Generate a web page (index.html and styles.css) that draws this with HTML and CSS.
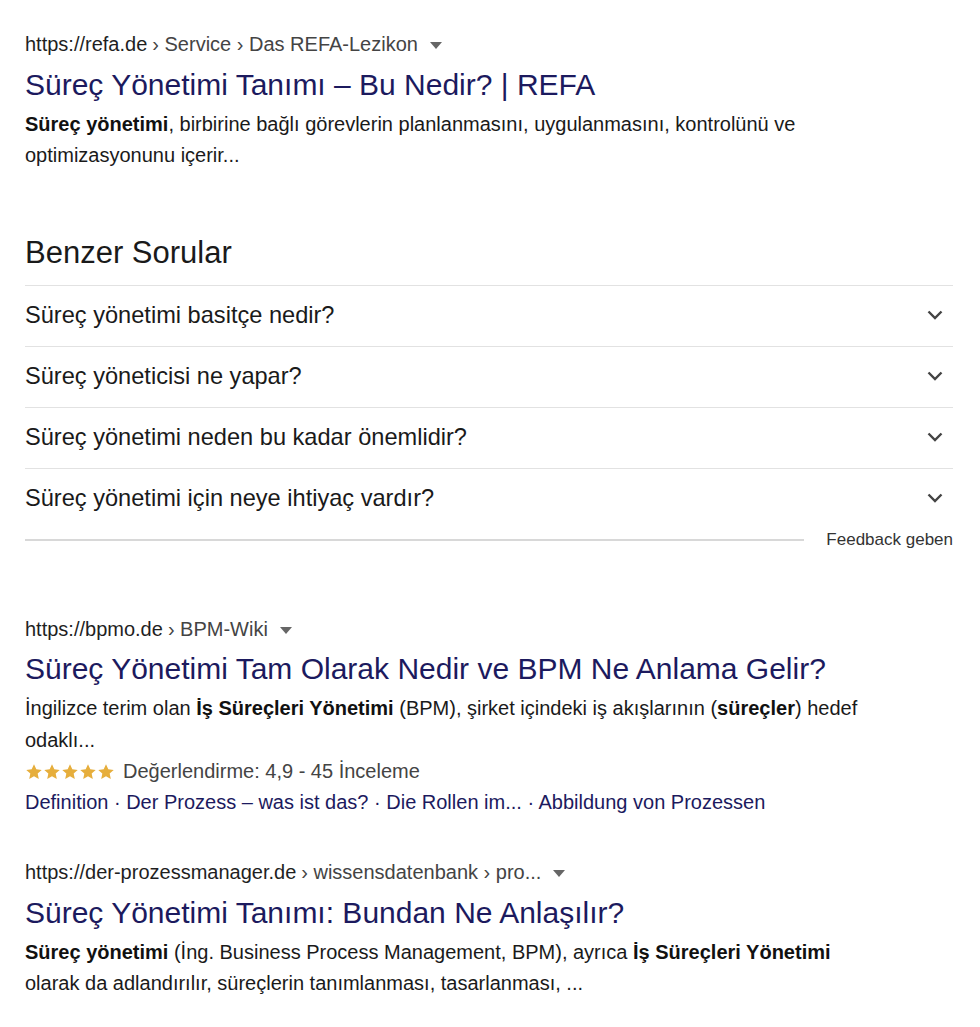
FILE: index.html
```html
<!DOCTYPE html>
<html lang="tr">
<head>
<meta charset="utf-8">
<link rel="stylesheet" href="styles.css">
</head>
<body>
<main class="page">
  <section class="result">
    <div class="url">https://refa.de <span class="crumb">› Service › Das REFA-Lezikon</span><span class="caret"></span></div>
    <h3 class="title">Süreç Yönetimi Tanımı – Bu Nedir? | REFA</h3>
    <p class="snippet"><b>Süreç yönetimi</b>, birbirine bağlı görevlerin planlanmasını, uygulanmasını, kontrolünü ve optimizasyonunu içerir...</p>
  </section>

  <section class="paa">
    <h2 class="paa-head">Benzer Sorular</h2>
    <div class="q"><span>Süreç yönetimi basitçe nedir?</span><svg class="chev" viewBox="0 0 16 10" width="16" height="10"><path d="M1.5 1.5 L8 8 L14.5 1.5" fill="none" stroke="#444" stroke-width="2.4"/></svg></div>
    <div class="q"><span>Süreç yöneticisi ne yapar?</span><svg class="chev" viewBox="0 0 16 10" width="16" height="10"><path d="M1.5 1.5 L8 8 L14.5 1.5" fill="none" stroke="#444" stroke-width="2.4"/></svg></div>
    <div class="q"><span>Süreç yönetimi neden bu kadar önemlidir?</span><svg class="chev" viewBox="0 0 16 10" width="16" height="10"><path d="M1.5 1.5 L8 8 L14.5 1.5" fill="none" stroke="#444" stroke-width="2.4"/></svg></div>
    <div class="q last"><span>Süreç yönetimi için neye ihtiyaç vardır?</span><svg class="chev" viewBox="0 0 16 10" width="16" height="10"><path d="M1.5 1.5 L8 8 L14.5 1.5" fill="none" stroke="#444" stroke-width="2.4"/></svg></div>
    <div class="feedback"><span class="fb-line"></span><span class="fb-text">Feedback geben</span></div>
  </section>

  <section class="result r2">
    <div class="url">https://bpmo.de <span class="crumb">› BPM-Wiki</span><span class="caret"></span></div>
    <h3 class="title">Süreç Yönetimi Tam Olarak Nedir ve BPM Ne Anlama Gelir?</h3>
    <p class="snippet">İngilizce terim olan <b>İş Süreçleri Yönetimi</b> (BPM), şirket içindeki iş akışlarının (<b>süreçler</b>) hedef odaklı...</p>
    <div class="rating">
      <span class="stars">
        <svg viewBox="0 0 24 24" width="18" height="18"><path d="M12 1.8l3.1 6.6 7.2.8-5.4 4.9 1.5 7.1L12 17.6l-6.4 3.6 1.5-7.1-5.4-4.9 7.2-.8z" fill="#e6ae3c"/></svg><svg viewBox="0 0 24 24" width="18" height="18"><path d="M12 1.8l3.1 6.6 7.2.8-5.4 4.9 1.5 7.1L12 17.6l-6.4 3.6 1.5-7.1-5.4-4.9 7.2-.8z" fill="#e6ae3c"/></svg><svg viewBox="0 0 24 24" width="18" height="18"><path d="M12 1.8l3.1 6.6 7.2.8-5.4 4.9 1.5 7.1L12 17.6l-6.4 3.6 1.5-7.1-5.4-4.9 7.2-.8z" fill="#e6ae3c"/></svg><svg viewBox="0 0 24 24" width="18" height="18"><path d="M12 1.8l3.1 6.6 7.2.8-5.4 4.9 1.5 7.1L12 17.6l-6.4 3.6 1.5-7.1-5.4-4.9 7.2-.8z" fill="#e6ae3c"/></svg><svg viewBox="0 0 24 24" width="18" height="18"><path d="M12 1.8l3.1 6.6 7.2.8-5.4 4.9 1.5 7.1L12 17.6l-6.4 3.6 1.5-7.1-5.4-4.9 7.2-.8z" fill="#e6ae3c"/></svg>
      </span>
      <span>Değerlendirme: 4,9 - 45 İnceleme</span>
    </div>
    <div class="links">Definition · Der Prozess – was ist das? · Die Rollen im... · Abbildung von Prozessen</div>
  </section>

  <section class="result r3">
    <div class="url">https://der-prozessmanager.de <span class="crumb">› wissensdatenbank › pro...</span><span class="caret"></span></div>
    <h3 class="title">Süreç Yönetimi Tanımı: Bundan Ne Anlaşılır?</h3>
    <p class="snippet"><b>Süreç yönetimi</b> (İng. Business Process Management, BPM), ayrıca <b>İş Süreçleri Yönetimi</b> olarak da adlandırılır, süreçlerin tanımlanması, tasarlanması, ...</p>
  </section>
</main>
</body>
</html>
```

FILE: styles.css
```css
* { box-sizing: border-box; }
html, body { margin: 0; padding: 0; background: #fff; }
body { font-family: "Liberation Sans", Arial, sans-serif; color: #111; }
.page { width: 980px; padding: 29px 27px 0 25px; }

.result { display: flex; flex-direction: column; }
.url { font-size: 20px; line-height: 30px; color: #1f1f1f; display: flex; align-items: center; white-space: nowrap; }
.crumb { color: #444; margin-left: 5px; }
.caret { width: 0; height: 0; border-left: 6px solid transparent; border-right: 6px solid transparent; border-top: 7px solid #666; margin-left: 12px; margin-top: 2px; }
.title { margin: 6px 0 0; font-weight: normal; font-size: 30px; line-height: 40px; color: #1c1a5e; }
.snippet { margin: 4px 0 0; font-size: 20px; line-height: 31px; color: #1a1a1a; width: 850px; }
.snippet b { font-weight: bold; color: #111; }

.paa { margin-top: 62px; }
.paa-head { margin: 0; font-weight: normal; font-size: 31px; line-height: 40px; color: #1a1a1a; padding-bottom: 12px; border-bottom: 1.5px solid #e2e2e2; width: 928px; }
.q { width: 928px; height: 61px; display: flex; align-items: center; justify-content: space-between; font-size: 23.6px; color: #1a1a1a; border-bottom: 1.5px solid #e2e2e2; padding: 0 10px 2px 0; }
.q.last { border-bottom: none; padding-bottom: 3px; }
.chev { display: block; }
.feedback { display: flex; align-items: center; height: 20px; width: 928px; margin-top: 0; }
.fb-line { flex: 1; height: 2px; background: #d8d8d8; margin-right: 22px; }
.fb-text { font-size: 17px; color: #333; }

.r2 { margin-top: 64px; }
.r2 .title { margin-top: 5px; }
.r2 .snippet { margin-top: 3px; line-height: 32px; }
.rating { font-size: 20px; line-height: 31px; color: #444; display: flex; align-items: center; }
.stars { display: flex; margin-right: 8px; }
.stars svg { display: block; }
.links { font-size: 20px; line-height: 31px; color: #1c1a5e; }
.r3 { margin-top: 39px; }
.r3 .title { margin-top: 6px; }
.r3 .snippet { margin-top: 4px; }
```
